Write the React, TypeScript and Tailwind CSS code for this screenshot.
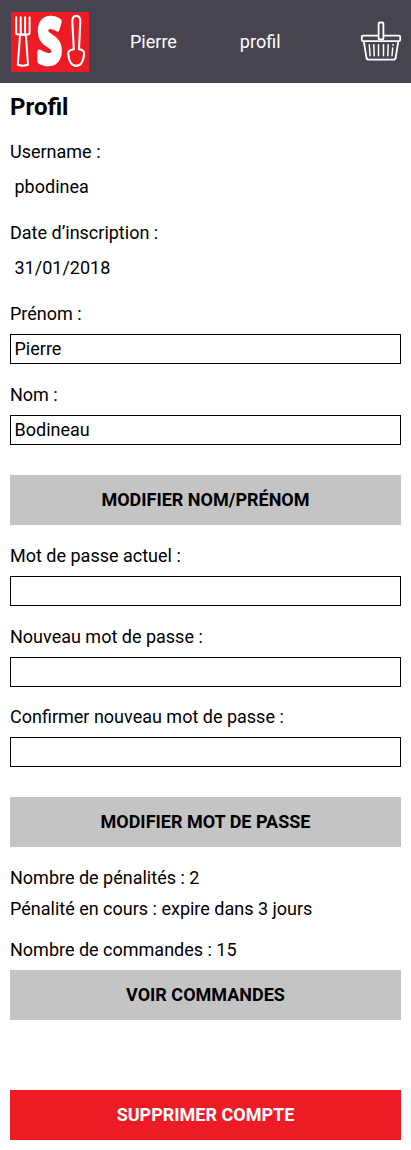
import type { ReactNode } from "react";

function Logo() {
  return (
    <svg width="78" height="60" viewBox="11 11.5 78 60" className="block shrink-0 overflow-visible" fill="none" stroke="#fff">
      <rect x="11" y="11.5" width="78" height="60" fill="#ed1c24" stroke="none" />
      <g strokeWidth="2" strokeLinejoin="round" strokeLinecap="round">
        <path d="M16.2 16.8V32.2Q16.2 33.9 18 33.9H27.8Q29.6 33.9 29.6 32.2V16.8M20.7 16.8V32.5M25.1 16.8V32.5" />
        <path d="M20.1 34.2L17.8 64.3Q22.8 66 28 64.3L25.9 34.2Z" />
      </g>
      <path
        d="M73.8 48.7L72.3 21Q72.2 15.4 76.3 15.4Q80.4 15.4 80.3 21L79 48.7Q84.2 49.3 84.1 53Q83.2 65.4 76.2 65.4Q69.3 65.4 68.2 53Q68 49.5 73.8 48.7Z"
        strokeWidth="2.1"
        strokeLinejoin="round"
      />
      <text
        x="49.6"
        y="62"
        textAnchor="middle"
        fill="#fff"
        strokeWidth="5.6"
        strokeLinejoin="round"
        className="font-['Open_Sans'] text-[60px] font-bold"
        textLength="24"
        lengthAdjust="spacingAndGlyphs"
      >
        S
      </text>
    </svg>
  );
}

function Basket() {
  return (
    <svg width="42" height="42" viewBox="360 21 42 42" className="block shrink-0" fill="none" stroke="#fff" strokeWidth="1.8" strokeLinejoin="round">
      <path d="M378.6 35.6H363Q361.8 35.6 361.8 36.8V40Q361.8 41.2 363 41.2H399Q400.2 41.2 400.2 40V36.8Q400.2 35.6 399 35.6H383.4" />
      <rect x="378.6" y="22.5" width="4.8" height="16.9" rx="1" />
      <path d="M363.8 41.3L366.4 57.5Q366.8 59.7 369 59.7H393.5Q395.3 59.7 395.7 57.5L398.3 41.3" />
      <path
        d="M369.3 44.8L370.1 55.7M373.8 44.8L374.2 55.7M378.5 44.8V55.7M383.5 44.8V55.7M388.2 44.8L387.8 55.7M392.7 48L392 55.7M393 44.5V45.3"
        strokeWidth="1.5"
        strokeLinecap="round"
      />
    </svg>
  );
}

function Label({ children }: { children: ReactNode }) {
  return <span className="flex h-[30px] items-center pb-0.5">{children}</span>;
}

function Info({ label, value }: { label: string; value: string }) {
  return (
    <div className="flex flex-col gap-[5px]">
      <Label>{label}</Label>
      <span className="flex h-[30px] items-center px-[4.5px] pb-0.5">{value}</span>
    </div>
  );
}

function Field({ label, value, type = "text" }: { label: string; value?: string; type?: string }) {
  return (
    <label className="flex flex-col gap-[5px]">
      <Label>{label}</Label>
      <input type={type} defaultValue={value} className="h-[30px] w-full border border-black bg-white px-[3.5px] pb-0.5 outline-none" />
    </label>
  );
}

function Button({ children, className }: { children: ReactNode; className: string }) {
  return <button className={`flex h-[50px] w-full shrink-0 items-center justify-center pb-0.5 font-bold ${className}`}>{children}</button>;
}

export default function App() {
  return (
    <div className="flex h-[1150px] w-full flex-col bg-white font-[Roboto,sans-serif] text-[18px] leading-[21px] text-black">
      <header className="flex h-[83px] shrink-0 items-center bg-[#46444f] pr-[9px] pl-[11px] text-white">
        <Logo />
        <nav className="flex flex-1 gap-[63px] pl-[41px]">
          <a>Pierre</a>
          <a>profil</a>
        </nav>
        <Basket />
      </header>
      <main className="flex flex-col px-[10px]">
        <h1 className="mt-[9px] flex h-[30px] items-center text-2xl font-bold">Profil</h1>
        <section className="mt-[15px] flex flex-col gap-4">
          <Info label="Username :" value="pbodinea" />
          <Info label="Date d’inscription :" value="31/01/2018" />
          <Field label="Prénom :" value="Pierre" />
          <Field label="Nom :" value="Bodineau" />
        </section>
        <Button className="mt-[30px] bg-[#c4c4c4]">MODIFIER NOM/PRÉNOM</Button>
        <section className="mt-4 flex flex-col">
          <Field label="Mot de passe actuel :" type="password" />
          <div className="mt-4 flex flex-col gap-[15px]">
            <Field label="Nouveau mot de passe :" type="password" />
            <Field label="Confirmer nouveau mot de passe :" type="password" />
          </div>
        </section>
        <Button className="mt-[30px] bg-[#c4c4c4]">MODIFIER MOT DE PASSE</Button>
        <section className="mt-4 flex flex-col gap-px">
          <Label>Nombre de pénalités : 2</Label>
          <Label>Pénalité en cours : expire dans 3 jours</Label>
        </section>
        <section className="mt-[11px] flex flex-col gap-[5px]">
          <Label>Nombre de commandes : 15</Label>
          <Button className="bg-[#c4c4c4]">VOIR COMMANDES</Button>
        </section>
        <Button className="mt-[70px] bg-[#ed1c24] text-white">SUPPRIMER COMPTE</Button>
      </main>
    </div>
  );
}
